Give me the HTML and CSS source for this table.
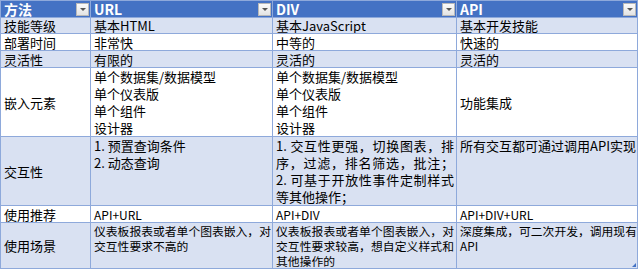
FILE: index.html
```html
<!DOCTYPE html>
<html lang="zh-CN">
<head>
<meta charset="utf-8">
<title>嵌入方式对比</title>
<link rel="stylesheet" href="styles.css">
</head>
<body>
<div class="sheet">
<table class="grid">
  <colgroup><col class="c1"><col class="c2"><col class="c3"><col class="c4"></colgroup>
  <thead>
    <tr class="hd">
      <th><div class="hcell"><span>方法</span><span class="dd"></span></div></th>
      <th><div class="hcell"><span>URL</span><span class="dd"></span></div></th>
      <th><div class="hcell"><span>DIV</span><span class="dd"></span></div></th>
      <th><div class="hcell"><span>API</span><span class="dd"></span></div></th>
    </tr>
  </thead>
  <tbody>
    <tr class="r1 band">
      <td>技能等级</td><td>基本HTML</td><td>基本JavaScript</td><td>基本开发技能</td>
    </tr>
    <tr class="r2">
      <td>部署时间</td><td>非常快</td><td>中等的</td><td>快速的</td>
    </tr>
    <tr class="r3 band">
      <td>灵活性</td><td>有限的</td><td>灵活的</td><td>灵活的</td>
    </tr>
    <tr class="r4 multi">
      <td class="mid">嵌入元素</td>
      <td class="top"><div>单个数据集/数据模型</div><div>单个仪表版</div><div>单个组件</div><div>设计器</div></td>
      <td class="top"><div>单个数据集/数据模型</div><div>单个仪表版</div><div>单个组件</div><div>设计器</div></td>
      <td class="mid">功能集成</td>
    </tr>
    <tr class="r5 band multi">
      <td class="mid">交互性</td>
      <td class="top"><div>1. 预置查询条件</div><div>2. 动态查询</div></td>
      <td class="top"><div class="just">1. 交互性更强，切换图表，排</div><div class="just">序，过滤，排名筛选，批注；</div><div class="just">2. 可基于开放性事件定制样式</div><div>等其他操作；</div></td>
      <td class="top"><div>所有交互都可通过调用API实现</div></td>
    </tr>
    <tr class="r6 small">
      <td class="lbl">使用推荐</td><td>API+URL</td><td>API+DIV</td><td>API+DIV+URL</td>
    </tr>
    <tr class="r7 band scene">
      <td class="mid lbl">使用场景</td>
      <td class="top"><div class="just">仪表板报表或者单个图表嵌入，对</div><div>交互性要求不高的</div></td>
      <td class="top"><div class="just">仪表板报表或者单个图表嵌入，对</div><div class="just">交互性要求较高，想自定义样式和</div><div>其他操作的</div></td>
      <td class="top"><div class="just">深度集成，可二次开发，调用现有</div><div>API</div></td>
    </tr>
  </tbody>
</table>
<span class="grip"></span>
</div>
</body>
</html>
```

FILE: styles.css
```css
html, body {
  margin: 0;
  padding: 0;
  background: #ffffff;
}

.sheet {
  position: relative;
  width: 637px;
}

.grid {
  border-collapse: collapse;
  table-layout: fixed;
  width: 637px;
  font-family: "Noto Sans CJK SC", "Noto Sans", sans-serif;
  font-size: 13px;
  color: #000000;
}

.c1 { width: 90px; }
.c2 { width: 182px; }
.c3 { width: 184px; }
.c4 { width: 181px; }

.grid th,
.grid td {
  border: 1px solid #8ea9db;
  padding: 0 2px 0 3px;
  text-align: left;
  white-space: nowrap;
  overflow: hidden;
  line-height: 15px;
  vertical-align: middle;
}

.hd th {
  background: #4472c4;
  color: #ffffff;
  font-weight: bold;
  font-size: 14px;
  height: 16px;
  line-height: 16px;
  padding: 0 1px 0 3px;
  overflow: visible;
}

.hcell {
  display: flex;
  align-items: center;
  justify-content: space-between;
}

.dd {
  position: relative;
  width: 13px;
  height: 13px;
  box-sizing: border-box;
  background: linear-gradient(#fafafa, #e4e4e4);
  border: 1px solid #b9b9b9;
}

.dd::after {
  content: "";
  position: absolute;
  left: 3px;
  top: 4px;
  border-left: 3px solid transparent;
  border-right: 3px solid transparent;
  border-top: 3px solid #555555;
}

.band td {
  background: #d9e1f2;
}

.r1 td { height: 15px; }
.r2 td { height: 16px; }
.r3 td { height: 16px; }

.multi td { line-height: 17px; }
.r4 td { height: 68px; }
.r5 td { height: 67px; }

.small td {
  height: 16px;
  font-size: 12px;
}

.small td.lbl {
  font-size: 13px;
}

.scene td {
  height: 45px;
  font-size: 11.8px;
  line-height: 15px;
}

.scene td.lbl {
  font-size: 13px;
}

.grid td.top { vertical-align: top; }
.grid td.mid { vertical-align: middle; }

.just {
  text-align: justify;
  text-align-last: justify;
}

.grip {
  position: absolute;
  right: 1px;
  bottom: 2px;
  width: 0;
  height: 0;
  border-left: 4px solid transparent;
  border-bottom: 4px solid #4472c4;
}
```
